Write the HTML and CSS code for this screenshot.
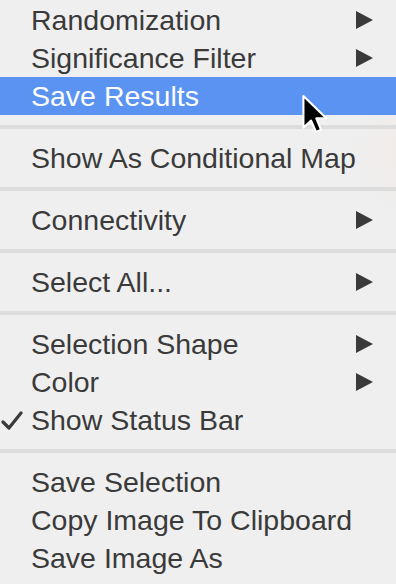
FILE: index.html
```html
<!DOCTYPE html>
<html lang="en">
  <head>
    <meta charset="UTF-8" />
    <title>Context menu</title>
    <link rel="stylesheet" href="styles.css">
  </head>
  <body>
    <div class="menu">
      <div class="group first">
        <div class="item">Randomization <span class="arrow"></span></div>
        <div class="item">Significance Filter <span class="arrow"></span></div>
        <div class="item active">Save Results</div>
      </div>
      <div class="sep"></div>
      <div class="group">
        <div class="item">Show As Conditional Map</div>
      </div>
      <div class="sep"></div>
      <div class="group">
        <div class="item">Connectivity <span class="arrow"></span></div>
      </div>
      <div class="sep"></div>
      <div class="group">
        <div class="item">Select All... <span class="arrow"></span></div>
      </div>
      <div class="sep"></div>
      <div class="group">
        <div class="item">Selection Shape <span class="arrow"></span></div>
        <div class="item">Color <span class="arrow"></span></div>
        <div class="item">
          <svg class="check" width="22" height="20" viewBox="0 0 22 20">
            <path d="M2 11 L8 17 L20 2" fill="none" stroke="#3a3a3a" stroke-width="3.2" stroke-linecap="round" stroke-linejoin="round" />
          </svg>
          Show Status Bar
        </div>
      </div>
      <div class="sep"></div>
      <div class="group">
        <div class="item">Save Selection</div>
        <div class="item">Copy Image To Clipboard</div>
        <div class="item">Save Image As</div>
      </div>
    </div>

    <svg class="cursor" width="28" height="40" viewBox="0 0 13 19">
      <path d="M1 1 L1 16 L4.6 12.6 L7 18 L9.4 17 L7.1 11.6 L12 11.6 Z" fill="#000" stroke="#fff" stroke-width="1" stroke-linejoin="round" />
    </svg>
  </body>
</html>
```

FILE: styles.css
```css
body {
  margin: 0;
  background: #efefef;
  font-family: "Liberation Sans", Arial, sans-serif;
  color: #3a3a3a;
  overflow: hidden;
}

.menu {
  width: 396px;
  height: 584px;
  background: radial-gradient(circle at 420px 150px, #f2ebe8 0, #efefef 70px);
}

.group {
  padding: 10px 0;
}

.group.first {
  padding: 1px 0 10px;
}

.item {
  position: relative;
  height: 38px;
  display: flex;
  align-items: center;
  padding-left: 31px;
  padding-right: 23px;
  font-size: 28.5px;
  white-space: nowrap;
}

.item.active {
  background: #5b93f3;
  color: #fff;
}

.arrow {
  margin-left: auto;
  width: 0;
  height: 0;
  border-top: 9px solid transparent;
  border-bottom: 9px solid transparent;
  border-left: 17px solid #3a3a3a;
}

.check {
  position: absolute;
  left: 1px;
  top: 10px;
}

.sep {
  height: 4px;
  background: #dddddd;
}

.cursor {
  position: absolute;
  left: 301px;
  top: 94px;
}
```
